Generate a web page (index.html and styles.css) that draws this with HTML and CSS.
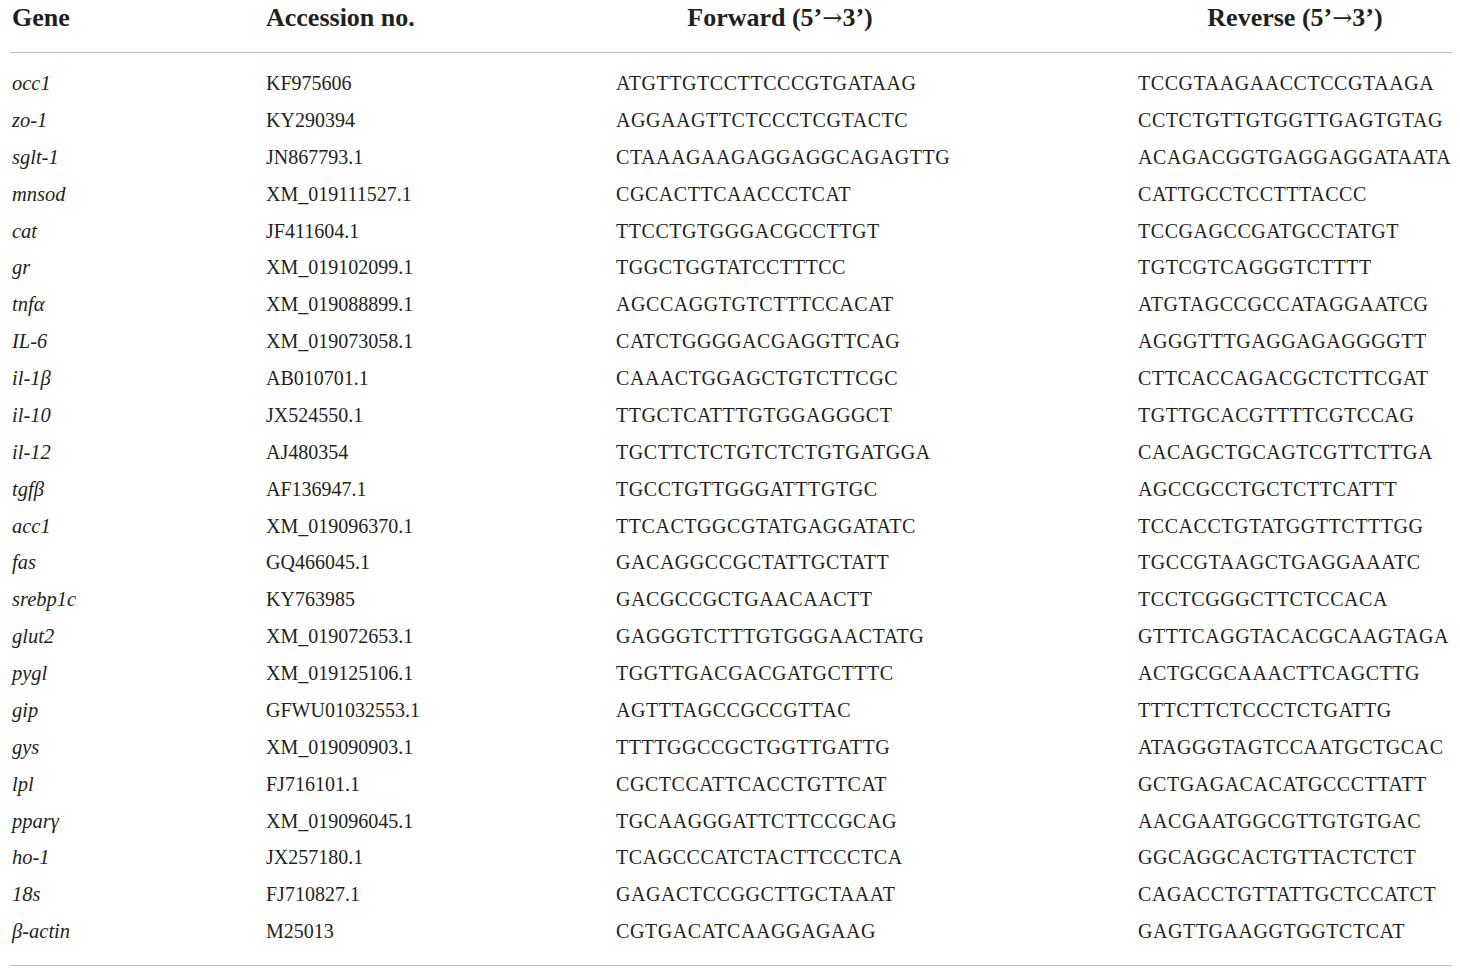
FILE: index.html
```html
<!DOCTYPE html>
<html lang="en">
<head>
<meta charset="utf-8">
<title>Primer sequences</title>
<link rel="stylesheet" href="styles.css">
</head>
<body>
<table class="primers">
  <colgroup>
    <col class="c-gene">
    <col class="c-acc">
    <col class="c-fwd">
    <col class="c-rev">
  </colgroup>
  <thead>
    <tr>
      <th class="h-gene">Gene</th>
      <th>Accession no.</th>
      <th class="h-fwd">Forward (5’<span class="arrow">→</span>3’)</th>
      <th class="h-rev">Reverse (5’<span class="arrow">→</span>3’)</th>
    </tr>
  </thead>
  <tbody>
    <tr><td class="gene">occ1</td><td>KF975606</td><td class="seq">ATGTTGTCCTTCCCGTGATAAG</td><td class="seq">TCCGTAAGAACCTCCGTAAGA</td></tr>
    <tr><td class="gene">zo-1</td><td>KY290394</td><td class="seq">AGGAAGTTCTCCCTCGTACTC</td><td class="seq">CCTCTGTTGTGGTTGAGTGTAG</td></tr>
    <tr><td class="gene">sglt-1</td><td>JN867793.1</td><td class="seq">CTAAAGAAGAGGAGGCAGAGTTG</td><td class="seq">ACAGACGGTGAGGAGGATAATA</td></tr>
    <tr><td class="gene">mnsod</td><td>XM_019111527.1</td><td class="seq">CGCACTTCAACCCTCAT</td><td class="seq">CATTGCCTCCTTTACCC</td></tr>
    <tr><td class="gene">cat</td><td>JF411604.1</td><td class="seq">TTCCTGTGGGACGCCTTGT</td><td class="seq">TCCGAGCCGATGCCTATGT</td></tr>
    <tr><td class="gene">gr</td><td>XM_019102099.1</td><td class="seq">TGGCTGGTATCCTTTCC</td><td class="seq">TGTCGTCAGGGTCTTTT</td></tr>
    <tr><td class="gene">tnf<span class="greek">α</span></td><td>XM_019088899.1</td><td class="seq">AGCCAGGTGTCTTTCCACAT</td><td class="seq">ATGTAGCCGCCATAGGAATCG</td></tr>
    <tr><td class="gene">IL-6</td><td>XM_019073058.1</td><td class="seq">CATCTGGGGACGAGGTTCAG</td><td class="seq">AGGGTTTGAGGAGAGGGGTT</td></tr>
    <tr><td class="gene">il-1<span class="greek">β</span></td><td>AB010701.1</td><td class="seq">CAAACTGGAGCTGTCTTCGC</td><td class="seq">CTTCACCAGACGCTCTTCGAT</td></tr>
    <tr><td class="gene">il-10</td><td>JX524550.1</td><td class="seq">TTGCTCATTTGTGGAGGGCT</td><td class="seq">TGTTGCACGTTTTCGTCCAG</td></tr>
    <tr><td class="gene">il-12</td><td>AJ480354</td><td class="seq">TGCTTCTCTGTCTCTGTGATGGA</td><td class="seq">CACAGCTGCAGTCGTTCTTGA</td></tr>
    <tr><td class="gene">tgf<span class="greek">β</span></td><td>AF136947.1</td><td class="seq">TGCCTGTTGGGATTTGTGC</td><td class="seq">AGCCGCCTGCTCTTCATTT</td></tr>
    <tr><td class="gene">acc1</td><td>XM_019096370.1</td><td class="seq">TTCACTGGCGTATGAGGATATC</td><td class="seq">TCCACCTGTATGGTTCTTTGG</td></tr>
    <tr><td class="gene">fas</td><td>GQ466045.1</td><td class="seq">GACAGGCCGCTATTGCTATT</td><td class="seq">TGCCGTAAGCTGAGGAAATC</td></tr>
    <tr><td class="gene">srebp1c</td><td>KY763985</td><td class="seq">GACGCCGCTGAACAACTT</td><td class="seq">TCCTCGGGCTTCTCCACA</td></tr>
    <tr><td class="gene">glut2</td><td>XM_019072653.1</td><td class="seq">GAGGGTCTTTGTGGGAACTATG</td><td class="seq">GTTTCAGGTACACGCAAGTAGA</td></tr>
    <tr><td class="gene">pygl</td><td>XM_019125106.1</td><td class="seq">TGGTTGACGACGATGCTTTC</td><td class="seq">ACTGCGCAAACTTCAGCTTG</td></tr>
    <tr><td class="gene">gip</td><td>GFWU01032553.1</td><td class="seq">AGTTTAGCCGCCGTTAC</td><td class="seq">TTTCTTCTCCCTCTGATTG</td></tr>
    <tr><td class="gene">gys</td><td>XM_019090903.1</td><td class="seq">TTTTGGCCGCTGGTTGATTG</td><td class="seq">ATAGGGTAGTCCAATGCTGCAC</td></tr>
    <tr><td class="gene">lpl</td><td>FJ716101.1</td><td class="seq">CGCTCCATTCACCTGTTCAT</td><td class="seq">GCTGAGACACATGCCCTTATT</td></tr>
    <tr><td class="gene">ppar<span class="greek">γ</span></td><td>XM_019096045.1</td><td class="seq">TGCAAGGGATTCTTCCGCAG</td><td class="seq">AACGAATGGCGTTGTGTGAC</td></tr>
    <tr><td class="gene">ho-1</td><td>JX257180.1</td><td class="seq">TCAGCCCATCTACTTCCCTCA</td><td class="seq">GGCAGGCACTGTTACTCTCT</td></tr>
    <tr><td class="gene">18s</td><td>FJ710827.1</td><td class="seq">GAGACTCCGGCTTGCTAAAT</td><td class="seq">CAGACCTGTTATTGCTCCATCT</td></tr>
    <tr><td class="gene"><span class="greek">β</span>-actin</td><td>M25013</td><td class="seq">CGTGACATCAAGGAGAAG</td><td class="seq">GAGTTGAAGGTGGTCTCAT</td></tr>
  </tbody>
</table>
</body>
</html>
```
FILE: styles.css
```css
html, body {
  margin: 0;
  padding: 0;
  background: #ffffff;
}

body {
  font-family: "Liberation Serif", "Times New Roman", serif;
  color: #231f20;
}

.primers {
  margin-left: 10px;
  width: 1442px;
  table-layout: fixed;
  border-collapse: collapse;
  border-spacing: 0;
}

.c-gene { width: 256px; }
.c-acc { width: 350px; }
.c-fwd { width: 522px; }
.c-rev { width: 314px; }

.primers th {
  font-size: 26px;
  font-weight: bold;
  line-height: 30px;
  padding: 3px 0 19px 0;
  text-align: left;
  border-bottom: 1px solid #bdbdbd;
  white-space: nowrap;
}

.primers .h-gene { padding-left: 2px; }

.primers .h-fwd {
  text-align: center;
  padding-right: 194px;
}

.primers .h-rev {
  text-align: center;
}

.arrow {
  font-family: "DejaVu Serif", serif;
  font-weight: normal;
  font-size: 24px;
}

.primers td {
  font-size: 20px;
  line-height: 36.87px;
  padding: 0;
  white-space: nowrap;
}

.primers td.seq {
  letter-spacing: 0.55px;
}

.primers td.gene {
  font-style: italic;
  font-size: 20.5px;
  padding-left: 2px;
}

.primers tbody tr:first-child td {
  padding-top: 12px;
}

.primers tbody tr:last-child td {
  padding-bottom: 15px;
  border-bottom: 1px solid #bdbdbd;
}
```
